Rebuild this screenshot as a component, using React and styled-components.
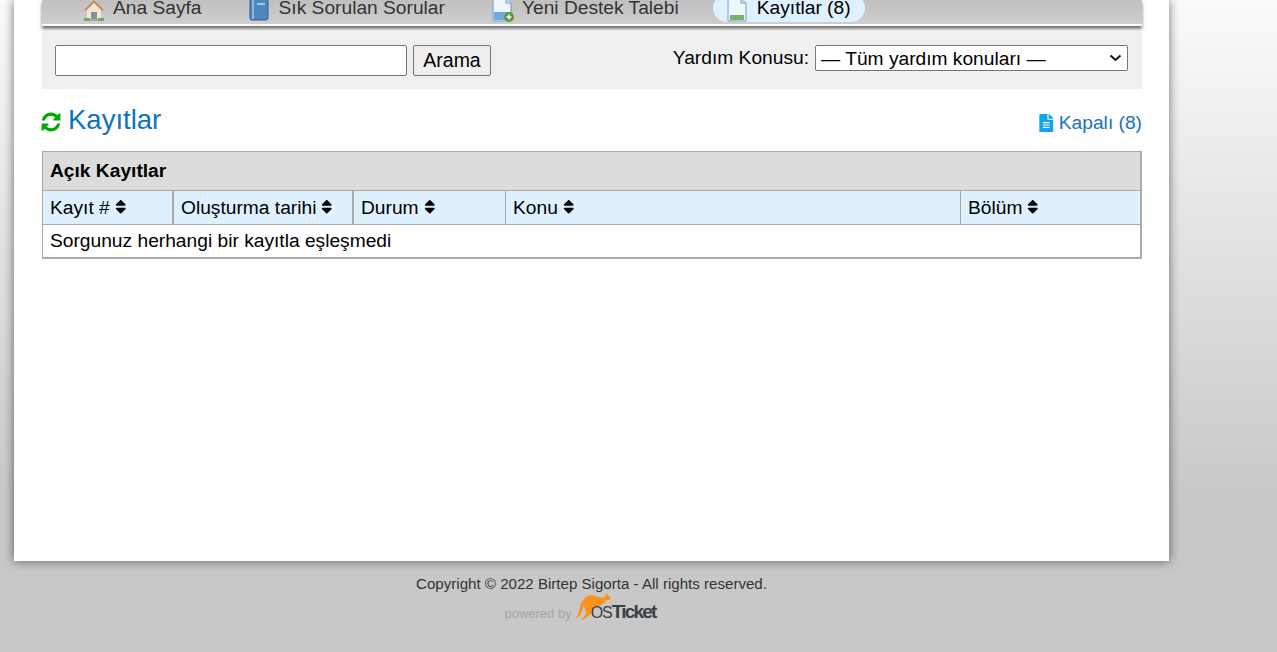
import React from "react";
import styled, { createGlobalStyle } from "styled-components";
import { FaSort, FaFileAlt } from "react-icons/fa";

const GlobalStyle = createGlobalStyle`
  html, body {
    margin: 0;
    height: 652px;
    overflow: hidden;
  }
  body {
    background: linear-gradient(#fbfbfb 0, #c8c8c8 500px);
    font-family: "Liberation Sans", Arial, sans-serif;
    font-size: 19.2px;
    color: #000;
  }
`;

const Container = styled.div`
  width: 1155px;
  margin-left: 14px;
`;

const Main = styled.div`
  height: 561px;
  box-sizing: border-box;
  padding: 0 27px 0 28px;
  background: #fff;
  box-shadow: 0 0 10px rgba(0, 0, 0, 0.55);
`;

const Nav = styled.nav`
  height: 24px;
  overflow: hidden;
  display: flex;
  gap: 19px;
  padding-left: 27px;
  background: linear-gradient(#c0c0c0, #cecece);
  border-bottom: 2px solid #fff;
  box-shadow: 0 3px 3px rgba(0, 0, 0, 0.55);
`;

const NavItem = styled.a`
  display: flex;
  align-items: center;
  gap: 8px;
  height: 28px;
  margin-top: -6px;
  margin-left: ${(p) => (p.$active ? "1px" : "0")};
  padding: 0 14px;
  border-radius: 14px;
  white-space: nowrap;
  color: ${(p) => (p.$active ? "#000" : "#333")};
  background: ${(p) => (p.$active ? "#dff0ff" : "transparent")};
  svg {
    margin-top: 4px;
  }
`;

const SearchBand = styled.form`
  margin-top: 5px;
  height: 58px;
  box-sizing: border-box;
  padding: 14px 14px 0 13px;
  display: flex;
  align-items: flex-start;
  justify-content: space-between;
  background: #f0f0f0;
`;

const SearchGroup = styled.div`
  display: flex;
  gap: 6px;
`;

const SearchInput = styled.input`
  width: 352px;
  height: 31px;
  box-sizing: border-box;
  border: 1px solid #767676;
  border-radius: 2px;
  background: #fff;
`;

const SearchButton = styled.button`
  width: 78px;
  height: 31px;
  padding: 0;
  border: 1px solid #767676;
  border-radius: 2px;
  background: #efefef;
  color: #000;
  font: 19.5px "Liberation Sans", Arial, sans-serif;
`;

const TopicGroup = styled.label`
  display: flex;
  align-items: flex-start;
  gap: 6px;
  line-height: 25px;
`;

const SelectWrap = styled.span`
  position: relative;
  display: block;
  height: 26px;
  svg {
    position: absolute;
    right: 6px;
    top: 9px;
    pointer-events: none;
  }
`;

const TopicSelect = styled.select`
  display: block;
  width: 313px;
  height: 26px;
  box-sizing: border-box;
  padding: 0 0 0 5px;
  appearance: none;
  border: 1px solid #767676;
  border-radius: 2px;
  background: #fff;
  color: #000;
  font: 19.2px "Liberation Sans", Arial, sans-serif;
`;

const TitleRow = styled.div`
  height: 62px;
  display: flex;
  align-items: flex-start;
  justify-content: space-between;
`;

const PageTitle = styled.h1`
  margin: 14px 0 0;
  display: flex;
  align-items: center;
  gap: 6px;
  font-size: 27.5px;
  font-weight: normal;
  line-height: 34px;
  color: #0a74bd;
  svg {
    margin-top: 4px;
  }
`;

const ClosedLink = styled.a`
  margin-top: 22px;
  display: flex;
  align-items: center;
  gap: 3px;
  line-height: 24px;
  color: #1a73c0;
  svg {
    color: #0ea5ea;
    font-size: 18.5px;
  }
`;

const Table = styled.table`
  width: 1100px;
  box-sizing: border-box;
  border-collapse: separate;
  border-spacing: 0;
  table-layout: fixed;
  border: solid #aaa;
  border-width: 1px 2px 2px 1px;
`;

const Caption = styled.th`
  height: 38px;
  padding: 0 7px;
  text-align: left;
  font-weight: bold;
  background: #dcdcdc;
  border-bottom: 1px solid #aaa;
`;

const HeadCell = styled.th`
  height: 34px;
  box-sizing: border-box;
  padding: 0 7px;
  text-align: left;
  font-weight: normal;
  white-space: nowrap;
  background: #dff0ff;
  border-bottom: 1px solid #aaa;
  border-left: ${(p) => p.$line}px solid #aaa;
  svg {
    font-size: 17.5px;
    margin-left: 2px;
    vertical-align: -2px;
  }
`;

const EmptyCell = styled.td`
  height: 32px;
  padding: 0 7px;
`;

const Footer = styled.footer`
  padding-top: 14px;
  text-align: center;
  font-size: 15.1px;
  line-height: 17px;
  color: #333;
`;

const PoweredBy = styled.div`
  height: 31px;
  display: flex;
  justify-content: center;
  align-items: flex-end;
  margin-left: -23px;
`;

const PoweredText = styled.span`
  font-size: 13px;
  line-height: 17px;
  margin-bottom: 1px;
  color: #a5a5a5;
  margin-right: 2px;
`;

const LogoText = styled.span`
  margin-left: -21px;
  font-size: 19px;
  line-height: 21px;
  font-weight: bold;
  letter-spacing: -1.8px;
  color: #3a3f44;
  small {
    font-size: 16px;
    font-weight: normal;
    letter-spacing: -1px;
  }
`;

const RefreshIcon = () => (
  <svg width="22" height="22" viewBox="0 0 1792 1792" style={{ marginLeft: -2 }}>
    <path
      fill="#00a800"
      d="M1639 1056q0 5-1 7-64 268-268 434.5t-478 166.5q-146 0-282.5-55t-243.5-157l-129 129q-19 19-45 19t-45-19-19-45v-448q0-26 19-45t45-19h448q26 0 45 19t19 45-19 45l-137 137q71 66 161 102t187 36q134 0 250-65t186-179q11-17 53-117 8-23 30-23h192q13 0 22.5 9.5t9.5 22.5zm25-800v448q0 26-19 45t-45 19h-448q-26 0-45-19t-19-45 19-45l138-138q-148-137-349-137-134 0-250 65t-186 179q-11 17-53 117-8 23-30 23h-199q-13 0-22.5-9.5t-9.5-22.5v-7q65-268 270-434.5t480-166.5q146 0 284 55.5t245 156.5l130-129q19-19 45-19t45 19 19 45z"
    />
  </svg>
);

const Chevron = () => (
  <svg width="13" height="8" viewBox="0 0 13 8">
    <path d="M1.5 1.5 6.5 6l5-4.5" fill="none" stroke="#111" strokeWidth="2" />
  </svg>
);

const HomeIcon = () => (
  <svg width="22" height="24" viewBox="0 0 22 24">
    <path d="M1 12 11 2l10 10-2 1-8-8-8 8z" fill="#c8894a" />
    <path d="M4 12l7-7 7 7v9H4z" fill="#efe7d8" />
    <path d="M8 14h6v7H8z" fill="#8b9088" />
    <path d="M1 20h6v3H1zM15 20h6v3h-6z" fill="#6fae50" />
    <path d="M7 21h8v2H7z" fill="#a8a8a0" />
  </svg>
);

const BookIcon = () => (
  <svg width="22" height="24" viewBox="0 0 22 24">
    <rect x="1" y="1" width="18" height="21" rx="2" fill="#4f86bd" stroke="#2f5f93" />
    <path d="M4 2v19" stroke="#8fb6da" strokeWidth="2" />
    <path d="M8 6h8" stroke="#a9c8e4" strokeWidth="2" />
  </svg>
);

const PageIcon = ({ $plus }) => (
  <svg width="22" height="24" viewBox="0 0 22 24">
    <path d="M1 0h13l5 5v18H1z" fill="#eef5fb" stroke="#6d9cc9" />
    <path d="M14 0v5h5" fill="#cfe2f3" stroke="#6d9cc9" />
    {$plus ? (
      <>
        <path d="M2 14h16v8H2z" fill="#6ea9dc" />
        <circle cx="17" cy="19" r="5" fill="#5b9a3c" />
        <path d="M14.5 19h5M17 16.5v5" stroke="#fff" strokeWidth="1.5" />
      </>
    ) : (
      <path d="M3 17h14v5H3z" fill="#7fb069" />
    )}
  </svg>
);

const Kangaroo = () => (
  <svg width="38" height="32" viewBox="0 0 38 30" preserveAspectRatio="none">
    <path
      fill="#f7941d"
      d="M0 26C4 25 5 20 6 15 8 8 12 4 17 4 22 4 26 7 30 6L33 2 34 4 37 6 36 8 32 9C29 13 26 14 24 14 20 15 17 18 17 21 14 24 11 26 8 27L7 26C10 25 12 23 12 20 11 17 10 15 10 13 8 19 7 26 0 26z"
    />
  </svg>
);

const columns = [
  { label: "Kayıt #", width: 129, line: 0 },
  { label: "Oluşturma tarihi", width: 180, line: 2 },
  { label: "Durum", width: 153, line: 2 },
  { label: "Konu", width: 455, line: 1 },
];

const App = () => {
  return (
    <>
      <GlobalStyle />
      <Container>
        <Main>
          <Nav>
            <NavItem><HomeIcon />Ana Sayfa</NavItem>
            <NavItem><BookIcon />Sık Sorulan Sorular</NavItem>
            <NavItem><PageIcon $plus />Yeni Destek Talebi</NavItem>
            <NavItem $active><PageIcon />Kayıtlar (8)</NavItem>
          </Nav>
          <SearchBand>
            <SearchGroup>
              <SearchInput type="text" />
              <SearchButton type="button">Arama</SearchButton>
            </SearchGroup>
            <TopicGroup>
              Yardım Konusu:
              <SelectWrap>
                <TopicSelect>
                  <option>— Tüm yardım konuları —</option>
                </TopicSelect>
                <Chevron />
              </SelectWrap>
            </TopicGroup>
          </SearchBand>
          <TitleRow>
            <PageTitle><RefreshIcon />Kayıtlar</PageTitle>
            <ClosedLink><FaFileAlt />Kapalı (8)</ClosedLink>
          </TitleRow>
          <Table>
            <colgroup>
              {columns.map((col) => (
                <col key={col.label} style={{ width: col.width }} />
              ))}
              <col />
            </colgroup>
            <thead>
              <tr><Caption colSpan={5}>Açık Kayıtlar</Caption></tr>
              <tr>
                {columns.map((col) => (
                  <HeadCell key={col.label} $line={col.line}>
                    {col.label}<FaSort />
                  </HeadCell>
                ))}
                <HeadCell $line={1}>Bölüm<FaSort /></HeadCell>
              </tr>
            </thead>
            <tbody>
              <tr><EmptyCell colSpan={5}>Sorgunuz herhangi bir kayıtla eşleşmedi</EmptyCell></tr>
            </tbody>
          </Table>
        </Main>
        <Footer>
          Copyright © 2022 Birtep Sigorta - All rights reserved.
          <PoweredBy>
            <PoweredText>powered by</PoweredText>
            <Kangaroo />
            <LogoText><small>OS</small>Ticket</LogoText>
          </PoweredBy>
        </Footer>
      </Container>
    </>
  );
};

export default App;
